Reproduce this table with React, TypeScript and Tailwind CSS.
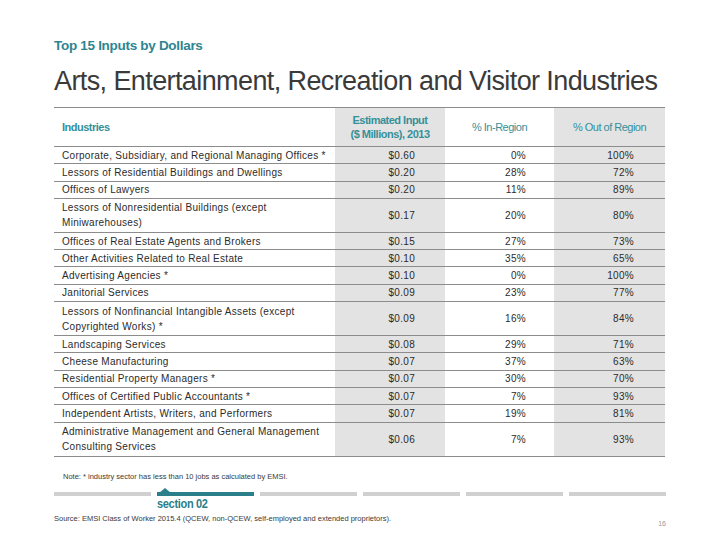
const rows: { name: string[]; value: string; inRegion: string; outRegion: string }[] = [
  { name: ['Corporate, Subsidiary, and Regional Managing Offices *'], value: '$0.60', inRegion: '0%', outRegion: '100%' },
  { name: ['Lessors of Residential Buildings and Dwellings'], value: '$0.20', inRegion: '28%', outRegion: '72%' },
  { name: ['Offices of Lawyers'], value: '$0.20', inRegion: '11%', outRegion: '89%' },
  { name: ['Lessors of Nonresidential Buildings (except', 'Miniwarehouses)'], value: '$0.17', inRegion: '20%', outRegion: '80%' },
  { name: ['Offices of Real Estate Agents and Brokers'], value: '$0.15', inRegion: '27%', outRegion: '73%' },
  { name: ['Other Activities Related to Real Estate'], value: '$0.10', inRegion: '35%', outRegion: '65%' },
  { name: ['Advertising Agencies *'], value: '$0.10', inRegion: '0%', outRegion: '100%' },
  { name: ['Janitorial Services'], value: '$0.09', inRegion: '23%', outRegion: '77%' },
  { name: ['Lessors of Nonfinancial Intangible Assets (except', 'Copyrighted Works) *'], value: '$0.09', inRegion: '16%', outRegion: '84%' },
  { name: ['Landscaping Services'], value: '$0.08', inRegion: '29%', outRegion: '71%' },
  { name: ['Cheese Manufacturing'], value: '$0.07', inRegion: '37%', outRegion: '63%' },
  { name: ['Residential Property Managers *'], value: '$0.07', inRegion: '30%', outRegion: '70%' },
  { name: ['Offices of Certified Public Accountants *'], value: '$0.07', inRegion: '7%', outRegion: '93%' },
  { name: ['Independent Artists, Writers, and Performers'], value: '$0.07', inRegion: '19%', outRegion: '81%' },
  { name: ['Administrative Management and General Management', 'Consulting Services'], value: '$0.06', inRegion: '7%', outRegion: '93%' },
]

const cols = 'grid grid-cols-[281px_110px_109px_111px]'

export default function App() {
  return (
    <div className="w-[720px] h-[540px] overflow-hidden bg-white pl-[54px] pr-[54px] pt-[38px] font-['Liberation_Sans',Arial,sans-serif] text-[#2b2b2b]">
      <h2 className="font-bold text-[13.5px] leading-[16px] tracking-[-0.3px] text-[#2d8591]">
        Top 15 Inputs by Dollars
      </h2>
      <h1 className="mt-[12px] whitespace-nowrap text-[27px] leading-[30px] tracking-[-0.6px] text-[#3a3a3a]">
        Arts, Entertainment, Recreation and Visitor Industries
      </h1>

      <div className="mt-[11px] w-[611px] border-t border-[#8c8c8c]">
        <div className={`${cols} h-[39px] border-b border-[#8c8c8c] text-[11px] leading-[14px] tracking-[-0.5px] text-[#35909a]`}>
          <div className="flex items-center pl-[8px] font-bold">Industries</div>
          <div className="flex items-center justify-center text-center font-bold bg-[#e3e3e3]">
            Estimated Input
            <br />
            ($ Millions), 2013
          </div>
          <div className="flex items-center justify-center">% In-Region</div>
          <div className="flex items-center justify-center bg-[#e3e3e3]">% Out of Region</div>
        </div>
        {rows.map((r) => (
          <div
            key={r.name.join(' ')}
            className={`${cols} ${r.name.length > 1 ? 'h-[34px]' : 'h-[17.3px]'} border-b border-[#8c8c8c] text-[10px] leading-[15px] tracking-[0.3px]`}
          >
            <div className="flex flex-col justify-center pl-[8px] whitespace-nowrap">
              {r.name.map((line) => (
                <span key={line}>{line}</span>
              ))}
            </div>
            <div className="flex items-center justify-end pr-[30px] bg-[#e3e3e3]">{r.value}</div>
            <div className="flex items-center justify-end pr-[28px]">{r.inRegion}</div>
            <div className="flex items-center justify-end pr-[31px] bg-[#e3e3e3]">{r.outRegion}</div>
          </div>
        ))}
      </div>

      <p className="mt-[15px] pl-[9px] text-[7.5px] leading-[10px] text-[#3a3a3a]">
        Note: * industry sector has less than 10 jobs as calculated by EMSI.
      </p>

      <div className="mt-[10px] w-[612px] flex gap-[6px]">
        <div className="flex-1 h-[4px] bg-[#d0d0d0]" />
        <div className="relative flex-1 h-[4px] bg-[#2a7f8a]">
          <svg className="absolute left-[2px] -top-[4px]" width="12" height="5" viewBox="0 0 12 5">
            <polygon points="0,5 6,0 12,5" fill="#2a7f8a" />
          </svg>
        </div>
        <div className="flex-1 h-[4px] bg-[#d0d0d0]" />
        <div className="flex-1 h-[4px] bg-[#d0d0d0]" />
        <div className="flex-1 h-[4px] bg-[#d0d0d0]" />
        <div className="flex-1 h-[4px] bg-[#d0d0d0]" />
      </div>
      <div className="pl-[103px]">
        <div className="origin-left scale-x-[0.85] font-bold text-[13px] leading-[15px] tracking-[-0.4px] text-[#2a7f8a]">
          section 02
        </div>
      </div>

      <div className="mt-[3px] w-[612px] flex justify-between items-end">
        <span className="text-[7.5px] leading-[10px] text-[#3a3a3a]">
          Source: EMSI Class of Worker 2015.4 (QCEW, non-QCEW, self-employed and extended proprietors).
        </span>
        <span className="text-[7px] leading-[8px] text-[#9a9a9a] -mb-[4px]">16</span>
      </div>
    </div>
  )
}
